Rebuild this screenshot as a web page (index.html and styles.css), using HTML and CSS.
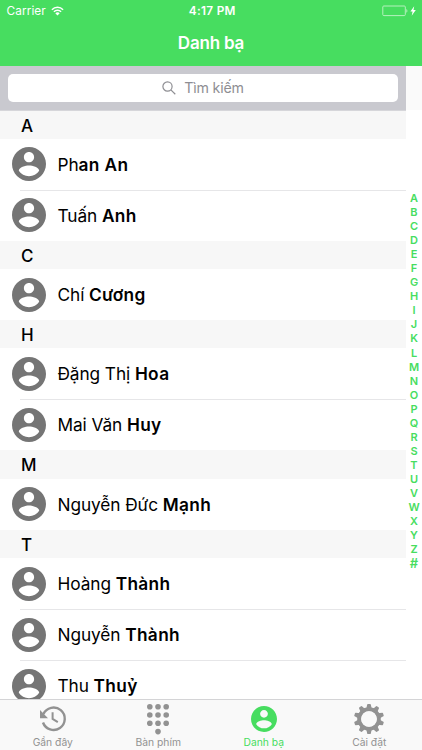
FILE: index.html
```
<!DOCTYPE html>
<html lang="vi">
<head>
    <meta charset="UTF-8">
    <meta name="viewport" content="width=device-width, initial-scale=1.0">
    <title>Danh bạ</title>
    <link rel="stylesheet" href="styles.css">
</head>
<body>

<svg class="sprite" width="0" height="0">
    <symbol id="person" viewBox="2 2 20 20">
        <path d="M12 2C6.48 2 2 6.48 2 12s4.48 10 10 10 10-4.48 10-10S17.52 2 12 2zm0 3c1.66 0 3 1.34 3 3s-1.34 3-3 3-3-1.34-3-3 1.34-3 3-3zm0 14.2c-2.5 0-4.71-1.28-6-3.22.03-1.99 4-3.08 6-3.08 1.99 0 5.97 1.09 6 3.08-1.29 1.94-3.5 3.22-6 3.22z"/>
    </symbol>
</svg>

<div class="phone">
    <header class="top-bar">
        <div class="status">
            <div class="carrier">
                <span>Carrier</span>
                <svg class="wifi" viewBox="0 0 13 10">
                    <path d="M.9 3.7a7.9 7.9 0 0 1 11.2 0M2.9 5.8a5.1 5.1 0 0 1 7.2 0" fill="none" stroke="#fff" stroke-width="1.5"/>
                    <path d="M6.5 9.5L4.3 7.3a3.1 3.1 0 0 1 4.4 0z" fill="#fff"/>
                </svg>
            </div>
            <div class="clock">4:17 PM</div>
            <svg class="battery" viewBox="0 0 36 12">
                <rect x=".8" y="1" width="22.5" height="9.6" rx="1" fill="none" stroke="#b5f1bd" stroke-width="1"/>
                <path d="M24.3 4v3.8c1.5-.6 1.5-3.2 0-3.8z" fill="#b5f1bd"/>
                <path d="M32.2 1.2L28.4 6.6h2.2L29.7 10.7 33.8 5.1h-2.3z" fill="#fff"/>
            </svg>
        </div>
        <h1>Danh bạ</h1>
    </header>

    <main class="content">
        <div class="list">
            <div class="search">
                <div class="search-field">
                    <svg viewBox="0 0 14 14"><circle cx="5.5" cy="5.5" r="4.6"/><path d="M8.9 8.9l4.4 4.3"/></svg>
                    <span>Tìm kiếm</span>
                </div>
            </div>

            <h2>A</h2>
            <div class="contact"><svg><use href="#person"/></svg><p>Ph<b>an An</b></p></div>
            <div class="contact"><svg><use href="#person"/></svg><p>Tuấn <b>Anh</b></p></div>

            <h2>C</h2>
            <div class="contact"><svg><use href="#person"/></svg><p>Chí <b>Cương</b></p></div>

            <h2>H</h2>
            <div class="contact"><svg><use href="#person"/></svg><p>Đặng Thị <b>Hoa</b></p></div>
            <div class="contact"><svg><use href="#person"/></svg><p>Mai Văn <b>Huy</b></p></div>

            <h2>M</h2>
            <div class="contact"><svg><use href="#person"/></svg><p>Nguyễn Đức <b>Mạnh</b></p></div>

            <h2>T</h2>
            <div class="contact"><svg><use href="#person"/></svg><p>Hoàng <b>Thành</b></p></div>
            <div class="contact"><svg><use href="#person"/></svg><p>Nguyễn <b>Thành</b></p></div>
            <div class="contact"><svg><use href="#person"/></svg><p>Thu <b>Thuỷ</b></p></div>
        </div>

        <div class="index">
            <span>A</span><span>B</span><span>C</span><span>D</span><span>E</span><span>F</span><span>G</span>
            <span>H</span><span>I</span><span>J</span><span>K</span><span>L</span><span>M</span><span>N</span>
            <span>O</span><span>P</span><span>Q</span><span>R</span><span>S</span><span>T</span><span>U</span>
            <span>V</span><span>W</span><span>X</span><span>Y</span><span>Z</span><span class="hash">#</span>
        </div>
    </main>

    <nav class="tabs">
        <div class="tab">
            <svg viewBox="0 0 32 32">
                <g fill="none" stroke="currentColor">
                    <path d="M6.4 11A11.2 11.2 0 1 1 6 19.5" stroke-width="2.4"/>
                    <path d="M15.6 9.3v6.6l5.2 3.2" stroke-width="2"/>
                </g>
                <path d="M3 7v8.2h8z" fill="currentColor"/>
            </svg>
            <span>Gần đây</span>
        </div>
        <div class="tab">
            <svg viewBox="0 0 32 32" fill="currentColor">
                <circle cx="7.8" cy="3.7" r="2.8"/><circle cx="16" cy="3.7" r="2.8"/><circle cx="24.2" cy="3.7" r="2.8"/>
                <circle cx="7.8" cy="12" r="2.8"/><circle cx="16" cy="12" r="2.8"/><circle cx="24.2" cy="12" r="2.8"/>
                <circle cx="7.8" cy="20.3" r="2.8"/><circle cx="16" cy="20.3" r="2.8"/><circle cx="24.2" cy="20.3" r="2.8"/>
                <circle cx="16" cy="28.6" r="2.8"/>
            </svg>
            <span>Bàn phím</span>
        </div>
        <div class="tab active">
            <svg viewBox="0 0 32 32" fill="currentColor"><use href="#person" x="3" y="3" width="26" height="26"/></svg>
            <span>Danh bạ</span>
        </div>
        <div class="tab">
            <svg viewBox="0 0 32 32">
                <circle cx="16" cy="16" r="9.8" fill="none" stroke="currentColor" stroke-width="4"/>
                <g fill="currentColor">
                    <path id="tooth" d="M13.2 6l1-4.5q.1-.6.7-.6h2.2q.6 0 .7.6l1 4.5z"/>
                    <use href="#tooth" transform="rotate(36 16 16)"/>
                    <use href="#tooth" transform="rotate(72 16 16)"/>
                    <use href="#tooth" transform="rotate(108 16 16)"/>
                    <use href="#tooth" transform="rotate(144 16 16)"/>
                    <use href="#tooth" transform="rotate(180 16 16)"/>
                    <use href="#tooth" transform="rotate(216 16 16)"/>
                    <use href="#tooth" transform="rotate(252 16 16)"/>
                    <use href="#tooth" transform="rotate(288 16 16)"/>
                    <use href="#tooth" transform="rotate(324 16 16)"/>
                </g>
                <circle cx="16" cy="16" r="7.8" fill="#f9f9f9"/>
            </svg>
            <span>Cài đặt</span>
        </div>
    </nav>
</div>

</body>
</html>
```
FILE: styles.css
```
* { box-sizing: border-box; }
body {
    margin: 0; background: #fff; color: #000;
    font-family: Inter, "Noto Sans", sans-serif;
}
h1, h2, p { margin: 0; }
svg { display: block; flex-shrink: 0; }
.sprite { display: none; }
.phone {
    width: 422px; height: 750px; overflow: hidden;
    display: flex; flex-direction: column;
}

/* Status bar and title */
.top-bar { height: 66px; flex-shrink: 0; background: #47dd60; color: #fff; }
.status {
    height: 21px; padding: 1px 4px 0 6.5px; font-size: 11.8px;
    display: grid; grid-template-columns: 1fr auto 1fr; align-items: center;
}
.carrier { display: flex; align-items: center; gap: 5px; letter-spacing: 0.1px; }
.wifi { width: 13px; height: 10px; }
.clock { font-weight: 600; letter-spacing: 0.3px; }
.battery { width: 36px; height: 12px; justify-self: end; }
h1 {
    font-size: 17px; font-weight: 600; line-height: 45px;
    text-align: center; letter-spacing: -0.2px;
}

/* Contact list */
.content { flex: 1; min-height: 0; display: flex; overflow: hidden; }
.list { width: 406px; flex-shrink: 0; }
.search {
    height: 44.6px; padding: 7.5px 8px 8.5px; background: #c9c9cf;
    border-bottom: 1px solid #d6d6da;
}
.search-field {
    height: 28.6px; border-radius: 5px; background: #fff; color: #8e8e93;
    display: flex; align-items: center; justify-content: center; gap: 8px;
    font-size: 14.2px; letter-spacing: -0.15px;
}
.search-field svg { width: 14px; height: 14px; fill: none; stroke: #8e8e93; stroke-width: 1.2; }
h2 {
    height: 28.3px; line-height: 30px; padding-left: 21px;
    background: #f7f7f7; font-size: 17px; font-weight: 500;
}
.contact {
    height: 51px; padding-left: 12px; position: relative;
    display: flex; align-items: center; gap: 11.5px;
}
.contact svg { width: 34px; height: 34px; fill: #757575; }
.contact p { font-size: 17.3px; letter-spacing: -0.1px; white-space: nowrap; }
.contact b { font-weight: 600; letter-spacing: 0.35px; }
.contact + .contact::before {
    content: ""; position: absolute; left: 20px; right: 0; top: 0;
    height: 1px; background: #e6e6e8;
}

/* Letter index */
.index {
    flex: 1; padding-top: 81px; border-top: 44px solid #fafafa;
    display: flex; flex-direction: column; align-items: center;
    color: #47dd60; font-size: 11px; font-weight: 600;
}
.index span { height: 14.06px; line-height: 14px; flex-shrink: 0; }
.index .hash { font-size: 13px; }

/* Tab bar */
.tabs {
    height: 51px; flex-shrink: 0; background: #f9f9f9; border-top: 1px solid #d4d4d6;
    display: grid; grid-template-columns: repeat(4, 1fr);
}
.tab {
    display: flex; flex-direction: column; align-items: center;
    padding-top: 3px; color: #929292; font-size: 10.3px; line-height: 15px;
}
.tab svg { width: 32px; height: 32px; }
.tab.active { color: #47dd60; }
```
